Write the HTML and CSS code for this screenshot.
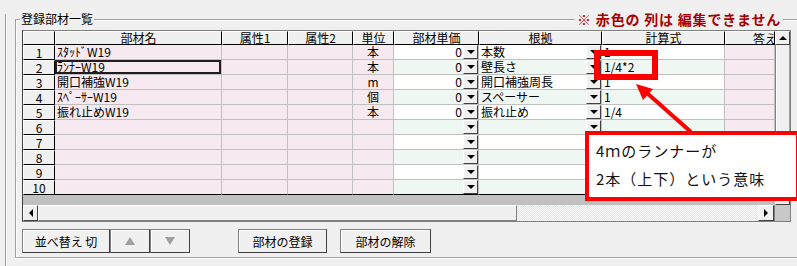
FILE: index.html
```html
<!DOCTYPE html>
<html lang="ja">
<head>
<meta charset="utf-8">
<title>登録部材一覧</title>
<link rel="stylesheet" href="styles.css">
</head>
<body>
<div class="outer">
  <div class="group">
    <div class="group-head">
      <span class="legend">登録部材一覧</span>
      <span class="note">※ 赤色の 列は 編集できません</span>
    </div>
    <div class="grid">
      <div class="grid-top">
        <div class="cells-wrap">
          <div class="cells">
            <div class="row head">
              <div class="h"></div><div class="h">部材名</div><div class="h">属性1</div><div class="h">属性2</div><div class="h">単位</div><div class="h">部材単価</div><div class="h">根拠</div><div class="h">計算式</div><div class="h clip"><span>答え</span></div>
            </div>
            <div class="row">
              <div class="rh">1</div><div class="c pk l">ｽﾀｯﾄﾞW19</div><div class="c pk"></div><div class="c pk"></div><div class="c pk ctr">本</div>
              <div class="c e num"><span class="v">0</span><span class="dd"></span></div><div class="c e l fx"><span class="t">本数</span><span class="dd"></span></div><div class="c e l">1</div><div class="c pk"></div>
            </div>
            <div class="row">
              <div class="rh">2</div><div class="c pk l focus">ﾗﾝﾅｰW19</div><div class="c pk"></div><div class="c pk"></div><div class="c pk ctr">本</div>
              <div class="c e num"><span class="v">0</span><span class="dd"></span></div><div class="c e l fx"><span class="t">壁長さ</span><span class="dd"></span></div><div class="c e l">1/4*2</div><div class="c pk"></div>
            </div>
            <div class="row">
              <div class="rh">3</div><div class="c pk l">開口補強W19</div><div class="c pk"></div><div class="c pk"></div><div class="c pk ctr">m</div>
              <div class="c e num"><span class="v">0</span><span class="dd"></span></div><div class="c e l fx"><span class="t">開口補強周長</span><span class="dd"></span></div><div class="c e l">1</div><div class="c pk"></div>
            </div>
            <div class="row">
              <div class="rh">4</div><div class="c pk l">ｽﾍﾟｰｻｰW19</div><div class="c pk"></div><div class="c pk"></div><div class="c pk ctr">個</div>
              <div class="c e num"><span class="v">0</span><span class="dd"></span></div><div class="c e l fx"><span class="t">スペーサー</span><span class="dd"></span></div><div class="c e l">1</div><div class="c pk"></div>
            </div>
            <div class="row">
              <div class="rh">5</div><div class="c pk l">振れ止めW19</div><div class="c pk"></div><div class="c pk"></div><div class="c pk ctr">本</div>
              <div class="c e num"><span class="v">0</span><span class="dd"></span></div><div class="c e l fx"><span class="t">振れ止め</span><span class="dd"></span></div><div class="c e l">1/4</div><div class="c pk"></div>
            </div>
            <div class="row">
              <div class="rh">6</div><div class="c pk"></div><div class="c pk"></div><div class="c pk"></div><div class="c pk"></div>
              <div class="c e num"><span class="dd"></span></div><div class="c e l fx"><span class="t"></span><span class="dd"></span></div><div class="c e"></div><div class="c pk"></div>
            </div>
            <div class="row">
              <div class="rh">7</div><div class="c pk"></div><div class="c pk"></div><div class="c pk"></div><div class="c pk"></div>
              <div class="c e num"><span class="dd"></span></div><div class="c e"></div><div class="c e"></div><div class="c pk"></div>
            </div>
            <div class="row">
              <div class="rh">8</div><div class="c pk"></div><div class="c pk"></div><div class="c pk"></div><div class="c pk"></div>
              <div class="c e num"><span class="dd"></span></div><div class="c e"></div><div class="c e"></div><div class="c pk"></div>
            </div>
            <div class="row">
              <div class="rh">9</div><div class="c pk"></div><div class="c pk"></div><div class="c pk"></div><div class="c pk"></div>
              <div class="c e num"><span class="dd"></span></div><div class="c e"></div><div class="c e"></div><div class="c pk"></div>
            </div>
            <div class="row last">
              <div class="rh">10</div><div class="c pk"></div><div class="c pk"></div><div class="c pk"></div><div class="c pk"></div>
              <div class="c e num"><span class="dd"></span></div><div class="c e"></div><div class="c e"></div><div class="c pk"></div>
            </div>
          </div>
          <div class="band"></div>
        </div>
        <div class="vscroll">
          <div class="sb-btn"><span class="tri-up"></span></div>
          <div class="sb-thumb"></div>
          <div class="sb-btn"><span class="tri-down"></span></div>
        </div>
      </div>
      <div class="hscroll">
        <div class="sb-btn hbtn"><span class="tri-left"></span></div>
        <div class="h-thumb"></div>
        <div class="h-track"></div>
        <div class="sb-btn hbtn2"><span class="tri-right"></span></div>
        <div class="corner"></div>
      </div>
    </div>
    <div class="buttons">
      <button class="btn b-sort">並べ替え 切</button>
      <button class="btn b-arrow"><span class="g-up"></span></button>
      <button class="btn b-arrow"><span class="g-down"></span></button>
      <button class="btn b-reg">部材の登録</button>
      <button class="btn b-rel">部材の解除</button>
    </div>
  </div>
</div>

<div class="mark-box"></div>
<svg class="arrow" width="797" height="266" viewBox="0 0 797 266">
  <line x1="691" y1="132" x2="647" y2="93" stroke="#ff0000" stroke-width="4"/>
  <polygon points="636,84 653,89 643,100" fill="#ff0000"/>
</svg>
<div class="callout">
  <p>4ｍのランナーが</p>
  <p>2本（上下）という意味</p>
</div>
</body>
</html>
```
FILE: styles.css
```css
* { box-sizing: border-box; }
html, body { margin: 0; }
body {
  position: relative;
  width: 797px;
  height: 266px;
  overflow: hidden;
  background: #f0f0f0;
  padding-top: 14px;
  font-family: "Noto Sans CJK JP", "DejaVu Sans", sans-serif;
  font-size: 12px;
  color: #000;
}
.outer {
  margin-left: 5px;
  height: 252px;
  padding-top: 5px;
  border-left: 1px solid #a0a0a0;
  box-shadow: inset 1px 0 0 #fff;
}
.group {
  margin-left: 9px;
  width: 800px;
  border-top: 1px solid #a0a0a0;
  border-left: 1px solid #a0a0a0;
  border-bottom: 1px solid #a0a0a0;
  box-shadow: inset 1px 1px 0 #fff, 0 1px 0 #fff;
  padding-bottom: 4px;
}
.group-head {
  display: flex;
  justify-content: space-between;
  align-items: center;
  height: 14px;
  margin-top: -8px;
  width: 781px;
}
.legend {
  margin-left: 4px;
  padding: 0 1px;
  background: #f0f0f0;
  font-size: 12px;
  line-height: 14px;
}
.note {
  margin-right: 14px;
  padding: 0 2px;
  background: #f0f0f0;
  color: #a80000;
  font-weight: bold;
  font-size: 14px;
  line-height: 16px;
  letter-spacing: 0.8px;
}
.grid {
  margin: 4px 0 0 6px;
  width: 769px;
  border: 1px solid #808080;
  border-left-color: #404040;
  background: #c0c0c0;
}
.grid-top { display: flex; }
.cells-wrap { width: 752px; }
.cells {
  display: grid;
  grid-template-columns: 32px 167px 66px 65px 41px 85px 123px 123px 50px;
  grid-auto-rows: 15px;
  grid-template-rows: 14px;
}
.row { display: contents; }
.h {
  background: #f0f0f0;
  border-top: 1px solid #fff;
  border-left: 1px solid #fff;
  border-right: 1px solid #000;
  border-bottom: 1px solid #000;
  text-align: center;
  line-height: 12px;
  white-space: nowrap;
}
.h.clip { text-align: left; padding-left: 27px; position: relative; }
.h.clip span { display: inline-block; width: 22px; overflow: hidden; vertical-align: top; line-height: 13px; height: 12px; }
.rh {
  background: #f0f0f0;
  border-top: 1px solid #fff;
  border-left: 1px solid #fff;
  border-right: 1px solid #000;
  border-bottom: 1px solid #000;
  text-align: center;
  line-height: 13px;
}
.c {
  border-right: 1px solid #c0c0c0;
  border-bottom: 1px solid #c0c0c0;
  line-height: 14px;
  white-space: nowrap;
}
.last .c { border-bottom-color: #000; }
.pk { background: #f6e9ef; }
.e { background: #fff; }
.row:nth-child(odd) .e { background: #eef7f1; }
.l { padding-left: 2px; }
.ctr { text-align: center; }
.focus { box-shadow: inset 0 0 0 2px #1e1e1e; }
.num { display: flex; justify-content: flex-end; }
.num .v { padding-right: 1px; }
.fx { display: flex; }
.fx .t { flex: 1; }
.dd {
  flex: none;
  width: 15px;
  height: 14px;
  background: #f0f0f0;
  border-top: 1px solid #fff;
  border-left: 1px solid #fff;
  border-right: 1px solid #404040;
  border-bottom: 1px solid #404040;
  display: flex;
  align-items: center;
  justify-content: center;
}
.dd::after {
  content: "";
  width: 0;
  height: 0;
  border-left: 4px solid transparent;
  border-right: 4px solid transparent;
  border-top: 4px solid #000;
}
.band { height: 10px; background: #c0c0c0; }
.vscroll {
  width: 15px;
  display: flex;
  flex-direction: column;
  background: #f0f0f0;
}
.sb-btn {
  flex: none;
  height: 14px;
  background: #f0f0f0;
  border-top: 1px solid #fff;
  border-left: 1px solid #fff;
  border-right: 1px solid #404040;
  border-bottom: 1px solid #404040;
  display: flex;
  align-items: center;
  justify-content: center;
}
.sb-thumb {
  flex: 1;
  background: #f0f0f0;
  border-left: 1px solid #808080;
  box-shadow: inset 1px 0 0 #fff, inset -1px 0 0 #a0a0a0;
}
.tri-up { border-left: 4px solid transparent; border-right: 4px solid transparent; border-bottom: 4px solid #000; }
.tri-down { border-left: 4px solid transparent; border-right: 4px solid transparent; border-top: 4px solid #000; }
.tri-left { border-top: 4px solid transparent; border-bottom: 4px solid transparent; border-right: 4px solid #000; }
.tri-right { border-top: 4px solid transparent; border-bottom: 4px solid transparent; border-left: 4px solid #000; }
.hscroll {
  display: flex;
  height: 16px;
}
.hscroll .sb-btn { height: 16px; }
.hbtn { width: 15px; }
.hbtn2 { width: 16px; }
.h-thumb {
  width: 479px;
  background: #f0f0f0;
  border-top: 1px solid #fff;
  border-left: 1px solid #fff;
  border-right: 1px solid #808080;
  border-bottom: 1px solid #808080;
}
.h-track {
  width: 241px;
  background-color: #f4f4f4;
  background-image: repeating-conic-gradient(#e4e4e4 0 25%, #fafafa 0 50%);
  background-size: 2px 2px;
}
.corner {
  width: 16px;
  background: #c8c8c8;
  border-left: 1px solid #808080;
}
.buttons {
  display: flex;
  margin: 7px 0 0 6px;
}
.btn {
  height: 24px;
  margin: 0;
  padding: 0;
  font-family: inherit;
  font-size: 12px;
  color: #000;
  background: #f0f0f0;
  border: 1px solid #808080;
  border-right-color: #404040;
  border-bottom-color: #404040;
  box-shadow: inset 1px 1px 0 #fff;
  display: flex;
  align-items: center;
  justify-content: center;
}
.b-sort { width: 88px; }
.b-arrow { width: 40px; }
.b-reg { width: 89px; margin-left: 48px; }
.b-rel { width: 91px; margin-left: 13px; }
.g-up { border-left: 5px solid transparent; border-right: 5px solid transparent; border-bottom: 8px solid #a0a0a0; }
.g-down { border-left: 5px solid transparent; border-right: 5px solid transparent; border-top: 8px solid #a0a0a0; }

.mark-box {
  position: absolute;
  left: 594px;
  top: 50px;
  width: 64px;
  height: 30px;
  border: 6px solid #ff0000;
}
.arrow {
  position: absolute;
  left: 0;
  top: 0;
  pointer-events: none;
}
.callout {
  position: absolute;
  left: 585px;
  top: 131px;
  width: 215px;
  height: 70px;
  border: 4px solid #ff0000;
  background: #fff;
  padding: 2px 0 0 7px;
}
.callout p {
  margin: 0;
  font-size: 15px;
  line-height: 28px;
  letter-spacing: 1px;
  color: #111;
  white-space: nowrap;
}
```
